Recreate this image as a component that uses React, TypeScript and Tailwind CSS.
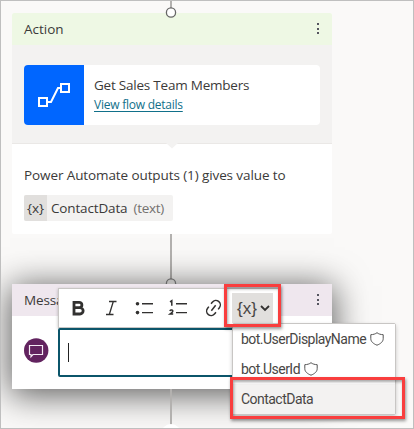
import type { ReactNode } from "react";

function Dots() {
  return (
    <svg width="4" height="12" viewBox="0 0 4 12" fill="#55555f">
      <rect x="1" y="0" width="2" height="2" />
      <rect x="1" y="5" width="2" height="2" />
      <rect x="1" y="9" width="2" height="2" />
    </svg>
  );
}

function Shield() {
  return (
    <svg className="shrink-0" width="14" height="14" viewBox="0 0 14 14" fill="none" stroke="#555" strokeWidth="1">
      <path d="M7 .7C5.400 2 3.300 2.600 .8 2.700v4c0 3 2.700 5.100 6.200 6.500 3.500-1.400 6.200-3.500 6.200-6.500v-4C10.700 2.600 8.600 2 7 .7Z" />
    </svg>
  );
}

function Connector({ className }: { className: string }) {
  return <div className={`ml-[169px] w-[2px] shrink-0 bg-[#b3b1af] ${className}`} />;
}

function MenuRow({ children, selected }: { children: ReactNode; selected?: boolean }) {
  return (
    <div className={`flex h-[30px] items-center gap-[4px] pl-[8px] ${selected ? "bg-[#f3f2f1]" : "bg-white"}`}>
      {children}
    </div>
  );
}

export default function App() {
  return (
    <div className="relative flex h-[429px] w-[414px] flex-col overflow-hidden border border-[#bfbfbf] bg-[#faf9f8] font-['Open_Sans',sans-serif] text-[13.500px] text-[#3b3a39]">
      <Connector className="h-[12px]" />
      <section className="ml-[11px] flex h-[221px] w-[320px] shrink-0 flex-col overflow-hidden rounded-[2px] bg-white">
        <header className="flex h-[32px] shrink-0 items-center justify-between bg-[#eef8e4] pr-[12px] pl-[12px]">
          <span>Action</span>
          <Dots />
        </header>
        <div className="relative h-[99px] shrink-0 border-b border-[#eae8e6] bg-[#f3f2f1] px-[12px] pt-[20px]">
          <div className="flex h-[60px] w-[296px] overflow-hidden rounded-[4px] bg-white">
            <div className="flex w-[60px] items-center justify-center bg-[#0066ff]">
              <svg width="60" height="60" viewBox="0 0 60 60" fill="none" stroke="white" strokeWidth="2">
                <rect x="15" y="33" width="8" height="8" />
                <rect x="37" y="19" width="8" height="8" />
                <path d="M24 37h3l7-14h3" />
              </svg>
            </div>
            <div className="pt-[11px] pl-[10px]">
              <div className="h-[19px] leading-[19px] tracking-[-0.220px]">Get Sales Team Members</div>
              <div className="h-[19px] text-[12px] leading-[19px] tracking-[-0.240px] text-[#11708a] underline underline-offset-2">View flow details</div>
            </div>
          </div>
          <svg className="absolute top-[98px] left-[153px]" width="14" height="7" viewBox="0 0 14 7">
            <path d="M1 0 7 5.500 13 0Z" fill="#f3f2f1" />
          </svg>
        </div>
        <div className="pt-[21px] pl-[12px]">
          <div className="h-[20px] leading-[20px] tracking-[-0.100px] whitespace-nowrap">Power Automate outputs (1) gives value to</div>
          <div className="mt-[10px] flex h-[26px] w-[149px] items-center overflow-hidden rounded-[2px] bg-[#f3f2f1]">
            <span className="flex h-full w-[23px] items-center justify-center bg-[#e1dfdd]">{"{x}"}</span>
            <span className="ml-[4px] tracking-[-0.150px]">ContactData</span>
            <span className="ml-[6px] tracking-[-0.300px] text-[#73716f]">(text)</span>
          </div>
        </div>
      </section>
      <Connector className="h-[50px]" />
      <section className="ml-[11px] flex h-[105px] w-[320px] shrink-0 flex-col bg-white shadow-[0_4px_32px_2px_rgba(0,0,0,0.64)]">
        <header className="flex h-[32px] shrink-0 items-center justify-between bg-[#efe7ee] pr-[12px] pl-[12px]">
          <span className="tracking-[-0.150px]">Message</span>
          <Dots />
        </header>
        <div className="pt-[22px] pl-[12px]">
          <svg width="25" height="25" viewBox="0 0 25 25" fill="none" stroke="#f4eaf4">
            <circle cx="12.200" cy="12.500" r="12.200" fill="#62235f" stroke="none" />
            <path d="M5.500 7.500h13v9h-9.500l-2 2.200v-2.200H5.500Z" strokeWidth="1.200" />
          </svg>
        </div>
      </section>
      <Connector className="h-[39px]" />
      <svg className="absolute top-[6px] left-[164px]" width="12" height="12" viewBox="0 0 12 12">
        <circle cx="6" cy="5.500" r="4.600" fill="white" stroke="#666" strokeWidth="1.300" />
      </svg>
      <svg className="absolute top-[277px] left-[164px]" width="12" height="6" viewBox="0 0 12 6">
        <circle cx="6" cy="5.500" r="4.600" fill="#b9b8b7" stroke="#666" strokeWidth="1.300" />
      </svg>
      <div className="absolute top-[423px] left-[160px] size-[20px] rounded-full bg-white" />

      <div className="absolute top-[287px] left-[57px] w-[222px]">
        <div className="flex h-[40px] items-center border border-[#c8c6c4] bg-white shadow-[0_1px_3px_rgba(0,0,0,0.25)]">
          <svg width="172" height="38" viewBox="0 0 172 38" fill="none" stroke="#323130" strokeWidth="1.400">
            <path d="M15 13.300h5.200a2.600 2.600 0 0 1 0 5.400H15Zm0 5.400h6a3 3 0 0 1 0 6.300H15Z" strokeWidth="2.800" />
            <path d="M50 12.500h7.500M47 25.500h7.500M54.300 12.500l-4 13" strokeWidth="1.300" />
            <path d="M83 14.700h11M83 23.600h11M117 14.700h11M117 23.600h11" />
            <g fill="#323130" stroke="none">
              <circle cx="78.500" cy="14.700" r="1.800" />
              <circle cx="78.500" cy="23.600" r="1.800" />
            </g>
            <path d="m111 12.800 1.800-1.200v5.200M110.800 22c.8-1.500 3.500-1.100 2.900.5-.3 1-1.600 1.600-2.800 2.600h3.300" strokeWidth="1.500" />
            <g transform="rotate(-52 154.500 19)" strokeWidth="1.500">
              <path d="M152.700 14.500h-2a4.500 4.500 0 0 0 0 9h2M156.300 14.500h2a4.500 4.500 0 0 1 0 9h-2M151 19h7" />
            </g>
          </svg>
          <div className="ml-px flex h-[30px] w-[41px] items-center bg-[#e1dfdd] pl-[5px] font-['Liberation_Sans',sans-serif] text-[17px] text-[#484644]">
            <span className="w-[20px] leading-none">{"{x}"}</span>
            <svg className="ml-[3px]" width="10" height="8" viewBox="0 0 10 8" fill="none" stroke="#323130" strokeWidth="1.800"><path d="m1 2 4 4 4-4" /></svg>
          </div>
        </div>
        <div className="flex h-[49px] items-center rounded-[2px] border-2 border-[#0b556a] bg-white pl-[8px]">
          <div className="h-[19px] w-px bg-[#222]" />
        </div>
      </div>

      <div className="absolute top-[322px] left-[231px] w-[164px] rounded-[2px] border border-[#c8c6c4] bg-white font-[Roboto,sans-serif] text-[14px] tracking-[-0.530px] text-[#484644] shadow-[0_2px_4px_rgba(0,0,0,0.2)]">
        <MenuRow><span>bot.UserDisplayName</span><Shield /></MenuRow>
        <MenuRow><span>bot.UserId</span><Shield /></MenuRow>
        <MenuRow selected><span>ContactData</span></MenuRow>
      </div>
      <div className="absolute top-[283px] left-[223px] h-[43px] w-[57px] border-3 border-[#f93e3e] shadow-[1px_2px_3px_rgba(0,0,0,0.4),inset_1px_2px_3px_rgba(0,0,0,0.35)]" />
      <div className="absolute top-[376px] left-[229px] h-[42px] w-[175px] border-3 border-[#f93e3e] shadow-[1px_2px_3px_rgba(0,0,0,0.4),inset_1px_2px_3px_rgba(0,0,0,0.35)]" />
    </div>
  );
}
